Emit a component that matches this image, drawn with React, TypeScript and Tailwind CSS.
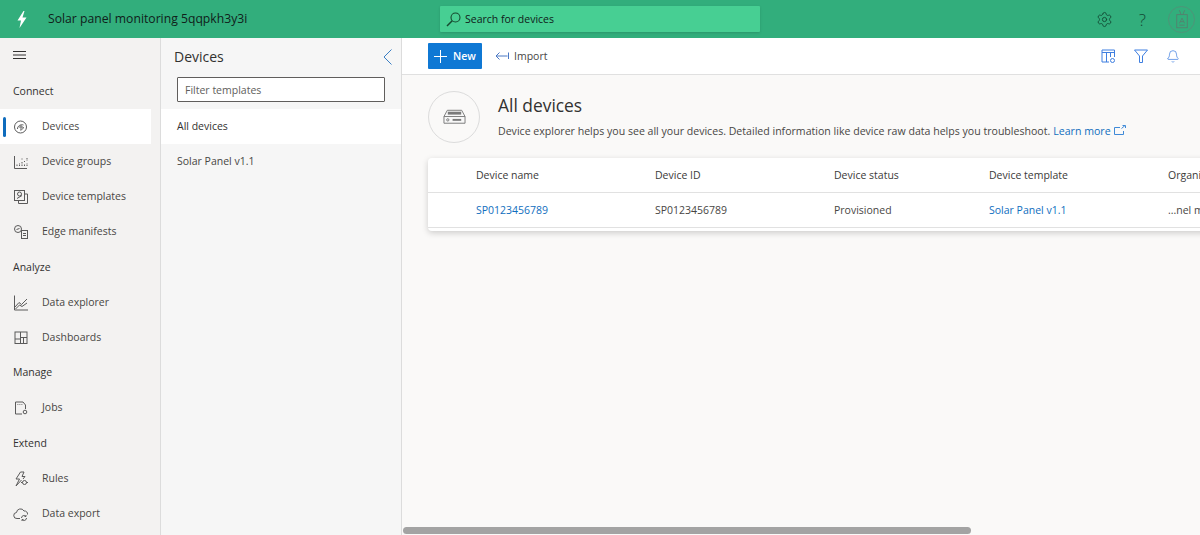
import React from 'react';
import { Settings, Bell } from 'lucide-react';

const font = { fontFamily: '"Open Sans", "Noto Sans", sans-serif' };

const Svg = ({ children, className }: { children: React.ReactNode; className?: string }) => (
  <svg viewBox="0 0 16 16" fill="none" stroke="currentColor" strokeWidth="1" className={className ?? 'w-4 h-4'}>
    {children}
  </svg>
);

const BoltIcon = () => (
  <svg viewBox="0 0 10 17" className="w-[10px] h-[17px]" fill="#fff">
    <path d="M6.5 0L0.5 9.5H4L2.5 17L9.5 6.5H5.5L7.5 0z" />
  </svg>
);
const SearchIcon = () => (
  <svg viewBox="0 0 15 15" fill="none" stroke="#17492f" strokeWidth="1.1" className="w-[15px] h-[15px]">
    <circle cx="9.5" cy="5.5" r="4.5" />
    <path d="M6.2 8.8L1 14" strokeWidth="1.5" />
  </svg>
);
const MenuIcon = () => (
  <svg viewBox="0 0 13 8" fill="none" stroke="#323130" strokeWidth="1" className="w-[13px] h-[8px]">
    <path d="M0 .5h13M0 4h13M0 7.5h13" />
  </svg>
);
const ChevronIcon = () => (
  <svg viewBox="0 0 9 16" fill="none" stroke="#3b7fc4" strokeWidth="1" className="w-[9px] h-[16px]">
    <path d="M8.5 .5L1 8l7.5 7.5" />
  </svg>
);
const PlusIcon = () => (
  <svg viewBox="0 0 13 13" fill="none" stroke="#fff" strokeWidth="1" className="w-[13px] h-[13px]">
    <path d="M6.5 0v13M0 6.5h13" />
  </svg>
);
const FunnelIcon = () => (
  <svg viewBox="0 0 14 14" fill="none" stroke="currentColor" strokeWidth="1" className="w-[14px] h-[14px]">
    <path d="M.5 1h13L8.5 7v6.5h-3V7z" />
  </svg>
);

const DevicesIcon = () => (
  <Svg>
    <circle cx="7.5" cy="8" r="6" />
    <path d="M4.5 10c0-3 3-5 6-4M7 11c2 0 3-1 3.5-3" />
    <circle cx="8" cy="8" r="1.2" />
  </Svg>
);
const GroupsIcon = () => (
  <Svg>
    <path d="M1.5 2v12.5H14" />
    <path d="M4 12v-2M6.5 12V9M9 12V7M9 4.5v1M11.5 12v-2M11.5 7v1M14 12V9M14 4v3" strokeDasharray="1.5 1" />
  </Svg>
);
const TemplatesIcon = () => (
  <Svg>
    <rect x="1.5" y="1.5" width="10" height="10" />
    <path d="M11.5 5h3v9.5h-9v-3" />
    <circle cx="6.5" cy="5" r="2" />
    <path d="M4 9.5l5-3" />
  </Svg>
);
const EdgeIcon = () => (
  <Svg>
    <circle cx="5" cy="5" r="3.5" />
    <path d="M3.5 5.5l3-1" />
    <rect x="8.5" y="6.5" width="6" height="8" fill="#f3f2f1" />
    <path d="M10 9.5h3M10 11.5h3" />
  </Svg>
);
const ExplorerIcon = () => (
  <Svg>
    <path d="M1.5 0.5v14.5H15" />
    <path d="M2 12l4-4.5 2.5 2L14 4M2.5 14l4-4 2.5 1.5L14 8" />
  </Svg>
);
const DashIcon = () => (
  <Svg>
    <rect x="2" y="2" width="12" height="11.5" />
    <path d="M7.5 2v11.5M7.5 7.5H14M2 9h5.5M10.5 7.5v6" />
  </Svg>
);
const JobsIcon = () => (
  <Svg>
    <path d="M9 14H2.5V2H10l2.5 3v4" />
    <path d="M4.5 4.5h.8M6.5 4.5h.8M8.5 4.5h.8" />
    <circle cx="12" cy="12" r="1.8" />
  </Svg>
);
const RulesIcon = () => (
  <Svg>
    <path d="M7.5 1L3 8h3.5L3 15l5.5-6" />
    <path d="M7.5 1H11L9 5.5h3L10 8" />
    <circle cx="11.5" cy="11.5" r="2" />
    <path d="M8 11.5h1.5M13.5 11.5H15" />
  </Svg>
);
const ExportIcon = () => (
  <Svg>
    <path d="M7 12.5H4a3 3 0 0 1-.5-6A4 4 0 0 1 11 5a3 3 0 0 1 3.5 3.5" />
    <path d="M8.5 12a2.5 2.5 0 0 1 4.5-1.5M13.5 12a2.5 2.5 0 0 1-4.5 1.5M13 9v1.5h-1.5M9 15v-1.5h1.5" />
  </Svg>
);
const ImportIcon = () => (
  <svg viewBox="0 0 14 10" fill="none" stroke="currentColor" strokeWidth="1" className="w-[14px] h-[10px]">
    <path d="M13.5 8V1.5M12.5 5H1M4.5 1.5L1 5l3.5 3.5" />
  </svg>
);
const ColumnsIcon = () => (
  <Svg>
    <path d="M9 14H2V2h12.5v7" />
    <path d="M2 4.5h12.5M6.5 4.5V14M10.5 4.5V9" />
    <circle cx="12.5" cy="12.5" r="2" />
  </Svg>
);
const BadgeIcon = () => (
  <svg viewBox="0 0 16 22" fill="none" stroke="currentColor" strokeWidth="1" className="w-[14px] h-[20px]">
    <rect x="2" y="6" width="12" height="15" />
    <path d="M5 1l2 5M11 1L9 6M5 16l3-6 3 6M6 14h4M5 18h6" />
  </svg>
);
const DeviceBoxIcon = () => (
  <svg viewBox="0 0 24 16" fill="none" stroke="#7a7a7a" strokeWidth="1" className="w-[23px] h-[16px]">
    <path d="M4.5 1h15l3.5 6.5v7H1v-7z" fill="#f8f8f8" />
    <path d="M1 7.5h22" />
    <rect x="5" y="2.5" width="14" height="3" fill="#7a7a7a" stroke="none" />
    <circle cx="5" cy="11" r="1.2" />
    <path d="M10 11h9" strokeWidth="2" />
  </svg>
);
const ExternalIcon = () => (
  <svg viewBox="0 0 12 10" fill="none" stroke="currentColor" strokeWidth="1" className="w-3 h-[10px]">
    <path d="M6 2.5H.5v7h9V6M7.5 3.5L11 .5M8.5.5H11.5v2.5" />
  </svg>
);

type NavEntry = { label: string; icon?: React.ReactNode; active?: boolean };

const nav: NavEntry[] = [
  { label: 'Connect' },
  { label: 'Devices', icon: <DevicesIcon />, active: true },
  { label: 'Device groups', icon: <GroupsIcon /> },
  { label: 'Device templates', icon: <TemplatesIcon /> },
  { label: 'Edge manifests', icon: <EdgeIcon /> },
  { label: 'Analyze' },
  { label: 'Data explorer', icon: <ExplorerIcon /> },
  { label: 'Dashboards', icon: <DashIcon /> },
  { label: 'Manage' },
  { label: 'Jobs', icon: <JobsIcon /> },
  { label: 'Extend' },
  { label: 'Rules', icon: <RulesIcon /> },
  { label: 'Data export', icon: <ExportIcon /> },
];

const Header = () => (
  <header className="h-[38px] shrink-0 bg-[#32ae7c] flex items-center relative">
    <div className="w-[48px] flex justify-center pr-[5px]">
      <BoltIcon />
    </div>
    <span className="text-[12.2px] text-[#10201a] w-[392px] whitespace-nowrap">Solar panel monitoring 5qqpkh3y3i</span>
    <div className="w-[320px] h-[26px] bg-[#47cf93] rounded-[1px] shadow-sm flex items-center pl-[6px] gap-[4px] text-[#10201a]">
      <SearchIcon />
      <span className="text-[10.5px] pt-[1px]">Search for devices</span>
    </div>
    <div className="flex-1 flex items-center justify-end pr-[5px] text-[#124a34]">
      <Settings className="w-[17px] h-[17px]" strokeWidth={1.25} />
      <span className="ml-[26px] text-[17px] leading-none font-light">?</span>
      <div className="ml-[22px] w-[27px] h-[27px] rounded-full border border-[#4f9478] flex items-center justify-center text-[#567f6e]">
        <BadgeIcon />
      </div>
    </div>
  </header>
);

const Sidebar = () => (
  <nav className="w-[161px] shrink-0 bg-[#f3f2f1] border-r border-[#dcdcdc] pr-[9px]">
    <div className="h-[36px] flex items-center pl-[13px] pb-[2px]">
      <MenuIcon />
    </div>
    {nav.map(item =>
      item.icon ? (
        <div
          key={item.label}
          className={`h-[35.2px] flex items-center relative pl-[13px] text-[#5a5a5a] ${item.active ? 'bg-white' : ''}`}
        >
          {item.active && <div className="absolute left-[3px] top-[8px] w-[3px] h-[20px] rounded-sm bg-[#0f6cbd]" />}
          <div className="w-[29px]">{item.icon}</div>
          <span className="text-[10.5px] text-[#484644] whitespace-nowrap">{item.label}</span>
        </div>
      ) : (
        <div key={item.label} className="h-[35.2px] flex items-center pl-[13px] text-[10.5px] text-[#323130] font-medium">
          {item.label}
        </div>
      ),
    )}
  </nav>
);

const TemplatePanel = () => (
  <aside className="w-[241px] shrink-0 bg-[#f6f6f6] border-r border-[#dcdcdc]">
    <div className="h-[37px] flex items-center justify-between pl-[13px] pr-[9px]">
      <span className="text-[14px] font-medium text-[#323130]">Devices</span>
      <ChevronIcon />
    </div>
    <div className="px-4 h-[34px] pt-[2px]">
      <div className="h-[25px] border border-[#605e5c] bg-white rounded-[1px] flex items-center pl-[7px] pt-[2px] text-[10.5px] text-[#605e5c]">
        Filter templates
      </div>
    </div>
    <div className="h-[35px] bg-white flex items-center pl-4 text-[10.5px] text-[#323130]">All devices</div>
    <div className="h-[36px] flex items-center pl-4 text-[10.5px] text-[#484644]">Solar Panel v1.1</div>
  </aside>
);

const Toolbar = () => (
  <div className="h-[37px] shrink-0 bg-white border-b border-[#e0e0e0] flex items-center pl-[26px]">
    <button className="w-[54px] h-[26px] bg-[#0f78d4] rounded-[1px] flex items-center pl-[6px] gap-[6px] text-white">
      <PlusIcon />
      <span className="text-[10.5px] font-semibold pt-[1px]">New</span>
    </button>
    <div className="ml-[13px] flex items-center gap-[5px] text-[#4b78c4]">
      <ImportIcon />
      <span className="text-[10.5px] text-[#484644] pt-[2px]">Import</span>
    </div>
    <div className="ml-auto flex items-center gap-[18px] pr-[20px] text-[#3f7fe0]">
      <ColumnsIcon />
      <FunnelIcon />
      <Bell className="w-[14px] h-[15px]" strokeWidth={1.25} />
    </div>
  </div>
);

const Row = ({ cells, head }: { cells: React.ReactNode[]; head?: boolean }) => {
  const widths = ['w-[179px]', 'w-[179px]', 'w-[155px]', 'w-[179px]', 'w-[120px]'];
  return (
    <div className={`flex items-center pl-[48px] pt-[2px] h-[35px] border-b border-[#e1e1e1] whitespace-nowrap text-[10.5px] ${head ? 'font-medium text-[#3b3a39]' : 'text-[#484644]'}`}>
      {cells.map((cell, i) => (
        <div key={i} className={`${widths[i]} shrink-0`}>{cell}</div>
      ))}
    </div>
  );
};

const Main = () => (
  <main className="flex-1 min-w-0 flex flex-col bg-[#faf9f8] overflow-hidden relative">
    <Toolbar />
    <section className="flex items-center pl-[26px] pt-[15px] h-[69px] shrink-0">
      <div className="w-[52px] h-[52px] rounded-full border border-[#dcdcdc] flex items-center justify-center shrink-0">
        <DeviceBoxIcon />
      </div>
      <div className="ml-[18px] -mt-[2px]">
        <h1 className="text-[17.4px] leading-[24px] font-medium text-[#323130]">All devices</h1>
        <p className="text-[10.58px] leading-[16px] text-[#484644] whitespace-nowrap flex items-center mt-[6px]">
          Device explorer helps you see all your devices. Detailed information like device raw data helps you troubleshoot.
          <span className="text-[#106ebe] ml-[3px]">Learn more</span>
          <span className="text-[#3f8ad8] ml-[3px] -mt-[3px]"><ExternalIcon /></span>
        </p>
      </div>
    </section>
    <div className="ml-[26px] mt-[14px] w-[900px] h-[73px] bg-white rounded-sm shadow-[0_2px_6px_rgba(0,0,0,0.18)] shrink-0">
      <Row head cells={['Device name', 'Device ID', 'Device status', 'Device template', 'Organization']} />
      <Row
        cells={[
          <span className="text-[#106ebe]">SP0123456789</span>,
          'SP0123456789',
          'Provisioned',
          <span className="text-[#106ebe]">Solar Panel v1.1</span>,
          '...nel maintenance',
        ]}
      />
    </div>
    <div className="absolute left-[1px] bottom-[1px] w-[568px] h-[7px] rounded bg-[#a3a3a3]" />
  </main>
);

export default function App() {
  return (
    <div className="w-[1200px] h-[535px] flex flex-col overflow-hidden" style={font}>
      <Header />
      <div className="flex flex-1 min-h-0">
        <Sidebar />
        <TemplatePanel />
        <Main />
      </div>
    </div>
  );
}
